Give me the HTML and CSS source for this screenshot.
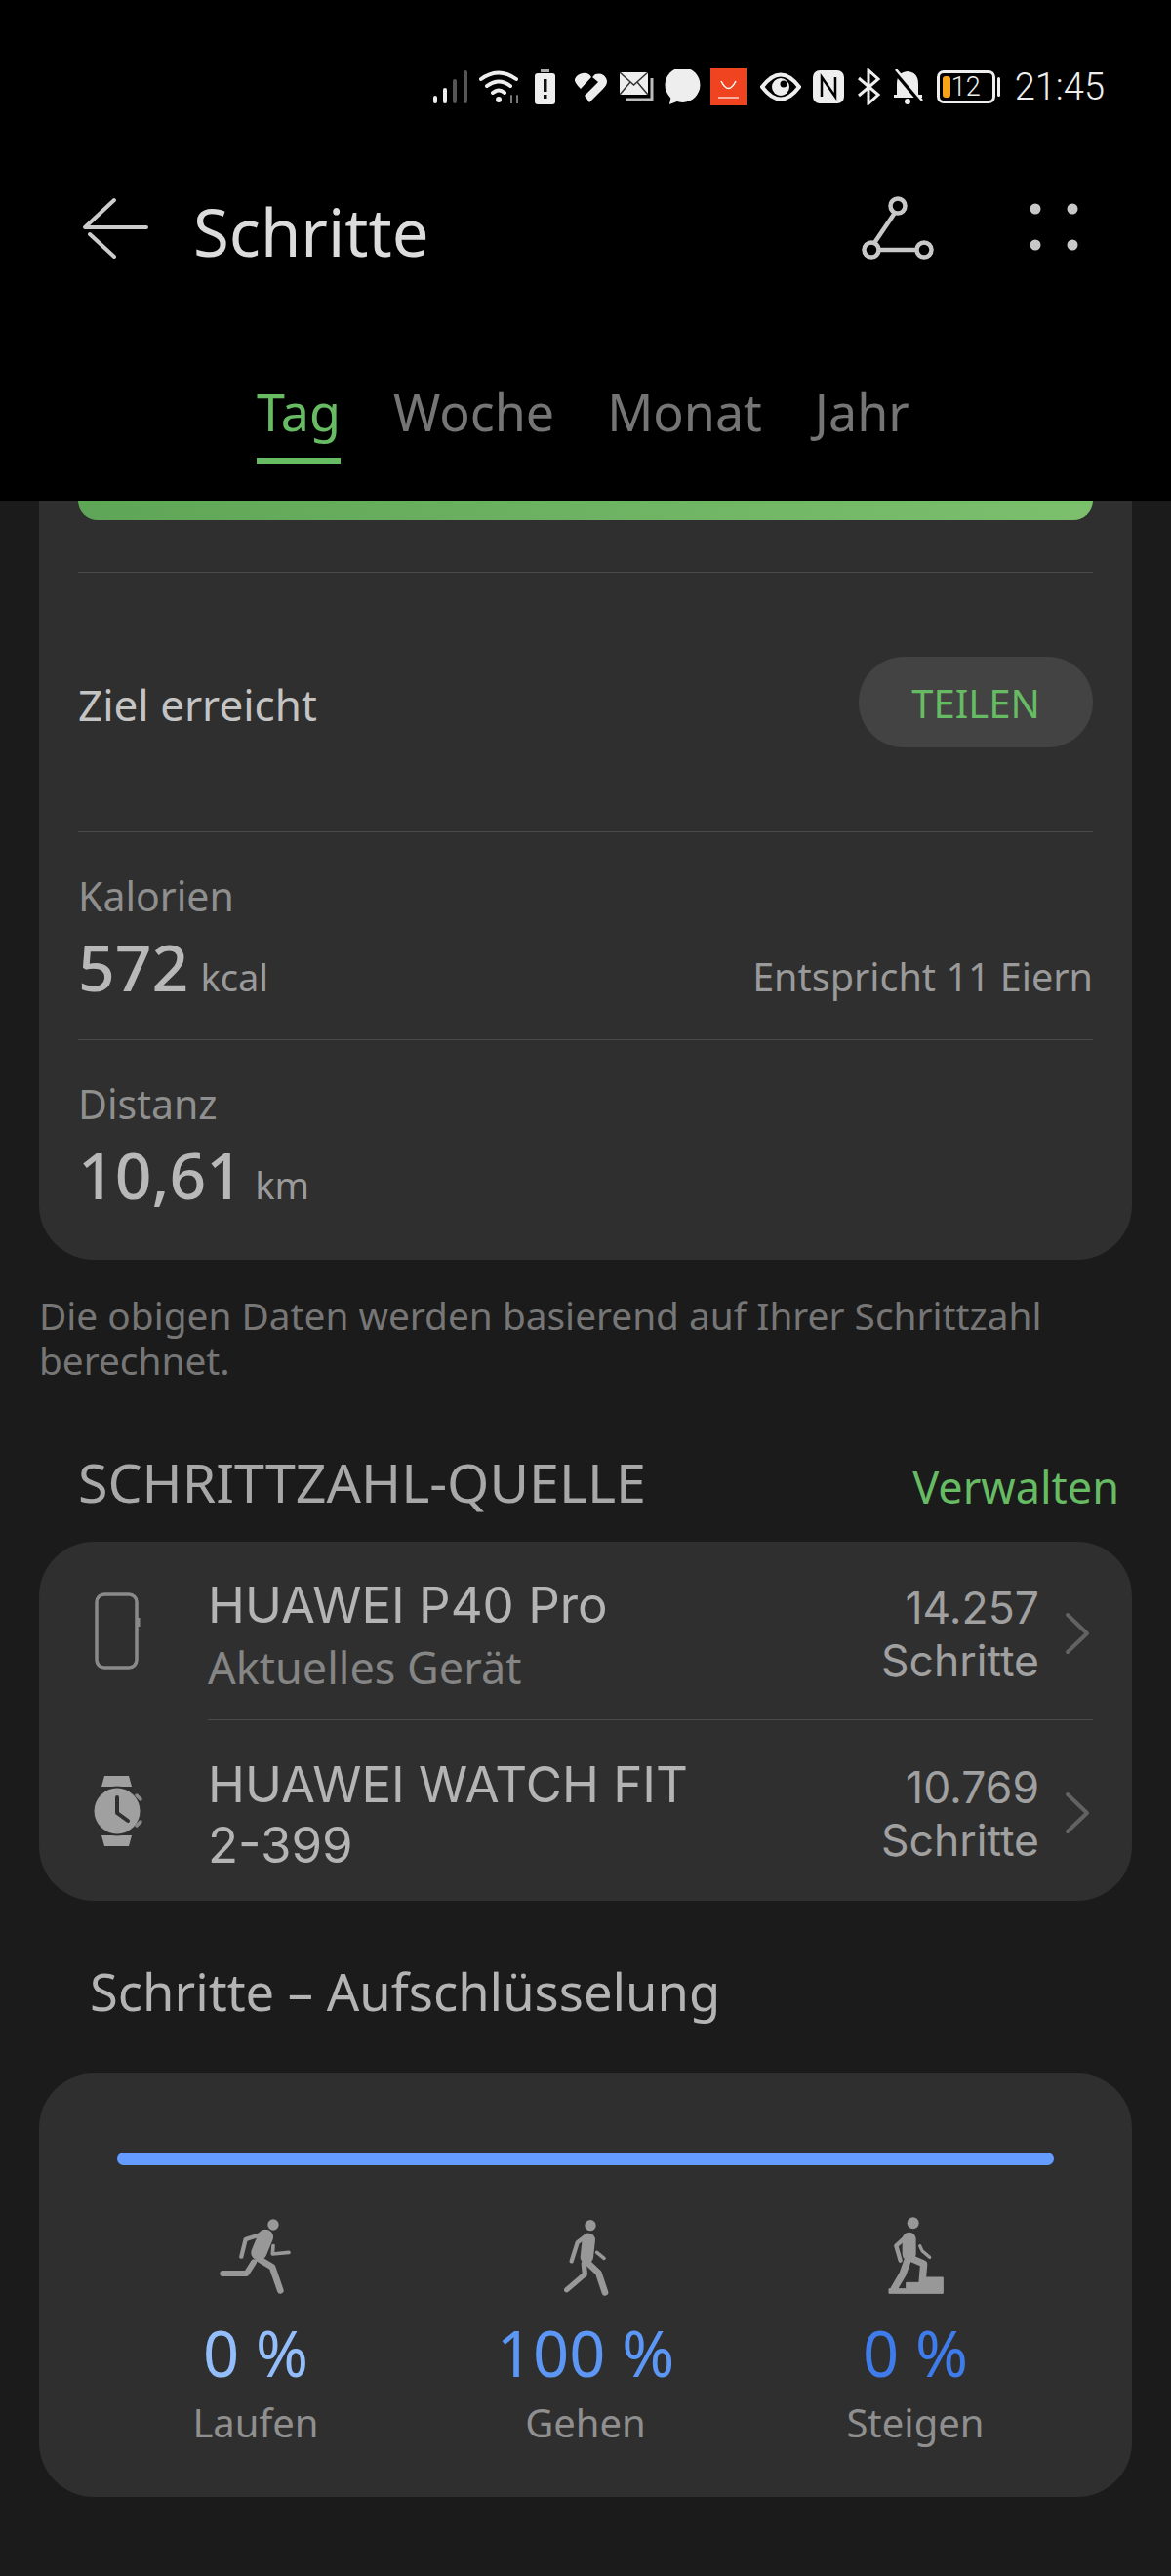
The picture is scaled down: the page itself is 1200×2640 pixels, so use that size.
FILE: index.html
```html
<!DOCTYPE html>
<html lang="de">
<head>
    <meta charset="UTF-8">
    <meta name="viewport" content="width=device-width, initial-scale=1.0">
    <title>Schritte</title>
    <link rel="stylesheet" href="styles.css">
</head>
<body>

<header class="topbar">
    <div class="status">
        <svg class="si" width="36" height="34" viewBox="0 0 36 34"><rect x="0" y="26" width="4" height="8" rx="2" fill="#eee"/><rect x="10" y="18" width="4" height="16" rx="2" fill="#eee"/><rect x="20" y="9" width="4" height="25" rx="2" fill="#555"/><rect x="31" y="0" width="4" height="34" rx="2" fill="#555"/></svg>
        <svg class="si" width="42" height="34" viewBox="0 0 42 34" fill="none" stroke="#eee" stroke-width="4" stroke-linecap="round"><path d="M2 9Q20 -4 38 9"/><path d="M8 16Q20 7 32 16"/><path d="M14 23Q20 18 26 23"/><circle cx="20" cy="30" r="3" fill="#eee" stroke="none"/><path d="M33 26v8M39 34v-8" stroke="#777" stroke-width="2"/></svg>
        <svg class="si" width="21" height="36" viewBox="0 0 21 36"><rect x="6" y="0" width="9" height="3" fill="#aaa"/><rect x="0" y="4" width="21" height="32" rx="3" fill="#eee"/><rect x="9" y="10" width="3.500" height="13" fill="#111"/><rect x="9" y="26" width="3.500" height="4" fill="#111"/></svg>
        <svg class="si" width="35" height="31" viewBox="0 0 35 31" fill="#eee"><path d="M9 1Q15 0 18 5L7 17Q0 10 1 7Q3 2 9 1Z"/><path d="M22 2Q30 0 33 6Q36 11 30 17L16 31L11 24L25 10L19 5Z"/></svg>
        <svg class="si" width="35" height="30" viewBox="0 0 35 30"><rect x="0" y="0" width="29" height="23" fill="#eee"/><path d="M0 0L14.500 13L29 0M0 23L11 10M29 23L18 10" stroke="#333" stroke-width="1.500" fill="none"/><path d="M33 6V28H6" stroke="#bbb" stroke-width="3" fill="none"/></svg>
        <svg class="si" width="37" height="36" viewBox="0 0 37 36" fill="#eee"><circle cx="18.500" cy="15.500" r="15.500" transform="translate(-3 -2) scale(1.160)"/><path d="M7 26L5 36L18 31Z"/></svg>
        <svg class="si" width="37" height="38" viewBox="0 0 37 38"><rect width="37" height="38" fill="#f0431f"/><path d="M11 13Q18.500 28 26 13" stroke="#fff" stroke-width="1.500" fill="none"/><rect x="8" y="29" width="21" height="2" fill="#f7b09e"/></svg>
        <svg class="si" width="42" height="30" viewBox="0 0 42 30"><path d="M2 15Q21 -10 40 15Q21 40 2 15Z" fill="none" stroke="#eee" stroke-width="4"/><circle cx="21" cy="15" r="9" fill="#eee"/><circle cx="24" cy="12" r="3.500" fill="#000"/></svg>
        <svg class="si" width="32" height="34" viewBox="0 0 32 34"><rect width="32" height="34" rx="7" fill="#eee"/><path d="M9 27V7L23 27V7" stroke="#000" stroke-width="2.500" fill="none"/></svg>
        <svg class="si" width="26" height="38" viewBox="0 0 26 38" fill="none" stroke="#eee" stroke-width="3"><path d="M3 10L23 27L13 36V2L23 11L3 28"/></svg>
        <svg class="si" width="33" height="36" viewBox="0 0 33 36"><path d="M16 2Q27 3 27 15V26H31V29H2V26H5V15Q5 3 16 2Z" fill="#eee"/><circle cx="16" cy="33" r="3" fill="#eee"/><path d="M2 1L30 34" stroke="#000" stroke-width="5"/><path d="M4 0L31 32" stroke="#eee" stroke-width="2.500"/></svg>
        <div class="bat"><span class="bat-fill"></span><span class="bat-num">12</span></div>
        <span class="bat-tip"></span>
        <span class="clock">21:45</span>
    </div>
    <div class="titlebar">
        <svg class="back" width="70" height="64" viewBox="0 0 70 64" fill="none" stroke="#ccc" stroke-width="4" stroke-linecap="round" stroke-linejoin="round"><path d="M34 4L4 32H67"/><path d="M9 39L34 62"/></svg>
        <h1 class="title">Schritte</h1>
        <svg class="share" width="76" height="68" viewBox="0 0 76 68" fill="none" stroke="#c8c8c8" stroke-width="4.500"><circle cx="39" cy="10" r="7.500"/><circle cx="12" cy="55" r="7.500"/><circle cx="66" cy="55" r="7.500"/><path d="M36 17L15 48M20 55H58"/></svg>
        <svg class="more" width="50" height="50" viewBox="0 0 50 50" fill="#c8c8c8"><circle cx="6" cy="6" r="5.500"/><circle cx="44" cy="6" r="5.500"/><circle cx="6" cy="43" r="5.500"/><circle cx="44" cy="43" r="5.500"/></svg>
    </div>
    <nav class="tabs">
        <span class="tab active">Tag</span>
        <span class="tab">Woche</span>
        <span class="tab">Monat</span>
        <span class="tab">Jahr</span>
    </nav>
</header>

<main class="page">
    <section class="card summary">
        <div class="goalbar"></div>
        <div class="row goal">
            <span class="goal-text">Ziel erreicht</span>
            <span class="btn">TEILEN</span>
        </div>
        <div class="row stat">
            <div class="stat-label">Kalorien</div>
            <div class="stat-line">
                <span><b class="num">572</b> <span class="unit">kcal</span></span>
                <span class="equiv">Entspricht 11 Eiern</span>
            </div>
        </div>
        <div class="row stat">
            <div class="stat-label">Distanz</div>
            <div class="stat-line">
                <span><b class="num">10,61</b> <span class="unit">km</span></span>
            </div>
        </div>
    </section>

    <p class="note">Die obigen Daten werden basierend auf Ihrer Schrittzahl berechnet.</p>

    <div class="source-head">
        <h2 class="source-title">SCHRITTZAHL-QUELLE</h2>
        <span class="manage">Verwalten</span>
    </div>

    <section class="card devices">
        <div class="device first">
            <svg class="dev-icon" width="50" height="80" viewBox="0 0 50 80" fill="none"><rect x="3" y="2" width="41" height="75" rx="8" stroke="#8a8a8a" stroke-width="3.500"/><rect x="44" y="26" width="3.500" height="9" fill="#8a8a8a"/></svg>
            <div class="dev-text">
                <div class="dev-name">HUAWEI P40 Pro</div>
                <div class="dev-sub">Aktuelles Gerät</div>
            </div>
            <div class="dev-count">14.257<br>Schritte</div>
            <svg class="chev" width="26" height="44" viewBox="0 0 26 44" fill="none" stroke="#626262" stroke-width="4" stroke-linecap="round" stroke-linejoin="round"><path d="M3 3L23 22L3 41"/></svg>
        </div>
        <div class="device">
            <svg class="dev-icon" width="50" height="74" viewBox="0 0 50 74"><path d="M8 12L11 1H36L39 12Z" fill="#a0a0a0"/><path d="M8 62L11 73H36L39 62Z" fill="#a0a0a0"/><circle cx="24" cy="37" r="25.500" fill="#2f2f2f"/><circle cx="24" cy="37" r="23.500" fill="#a0a0a0"/><path d="M24 23V39L35 47" fill="none" stroke="#2f2f2f" stroke-width="4" stroke-linecap="round" stroke-linejoin="round"/><path d="M44 21L48 25M44 52L48 48" stroke="#8a8a8a" stroke-width="3.500" stroke-linecap="round"/></svg>
            <div class="dev-text">
                <div class="dev-name">HUAWEI WATCH FIT<br>2-399</div>
            </div>
            <div class="dev-count">10.769<br>Schritte</div>
            <svg class="chev" width="26" height="44" viewBox="0 0 26 44" fill="none" stroke="#626262" stroke-width="4" stroke-linecap="round" stroke-linejoin="round"><path d="M3 3L23 22L3 41"/></svg>
        </div>
    </section>

    <h2 class="break-title">Schritte – Aufschlüsselung</h2>

    <section class="card breakdown">
        <div class="track"></div>
        <div class="modes">
            <div class="mode">
                <svg class="mode-icon" width="100" height="100" viewBox="6 0 300 300" fill="none" stroke="#989898" stroke-linecap="round" stroke-linejoin="round"><circle cx="210" cy="60" r="17" fill="#989898" stroke="none"/><path d="M112 158L125 105L178 88" stroke-width="13"/><path d="M186 98L166 146" stroke-width="48"/><path d="M165 165L207 190L232 262" stroke-width="20"/><path d="M150 175L128 210L55 210" stroke-width="18"/><path d="M210 125L208 150L258 145" stroke-width="11"/></svg>
                <div class="mode-val light">0 %</div>
                <div class="mode-name">Laufen</div>
            </div>
            <div class="mode">
                <svg class="mode-icon" width="100" height="100" viewBox="0 0 300 300" fill="none" stroke="#989898" stroke-linecap="round" stroke-linejoin="round"><circle cx="165" cy="62" r="17" fill="#989898" stroke="none"/><path d="M107 172L125 115L155 92" stroke-width="13"/><path d="M160 106L154 160" stroke-width="40"/><path d="M155 175L190 208L210 268" stroke-width="20"/><path d="M145 180L148 212L92 260" stroke-width="16"/><path d="M185 145L207 163" stroke-width="11"/></svg>
                <div class="mode-val mid">100 %</div>
                <div class="mode-name">Gehen</div>
            </div>
            <div class="mode">
                <svg class="mode-icon" width="100" height="100" viewBox="-6 0 300 300" fill="none" stroke="#989898" stroke-linecap="round" stroke-linejoin="round"><circle cx="137" cy="55" r="18" fill="#989898" stroke="none"/><path d="M98 170L85 125L115 97" stroke-width="13"/><path d="M125 104L125 150" stroke-width="42"/><path d="M158 125L165 140L188 160" stroke-width="10"/><path d="M135 165L170 180L165 240" stroke-width="22"/><path d="M120 170L105 212L78 258" stroke-width="22"/><path d="M172 222H229V271H63V257H116V238H172Z" fill="#989898" stroke-width="3"/></svg>
                <div class="mode-val dark">0 %</div>
                <div class="mode-name">Steigen</div>
            </div>
        </div>
    </section>
</main>

</body>
</html>
```

FILE: styles.css
```css
* {
    box-sizing: border-box;
}
html, body {
    margin: 0;
    padding: 0;
}
body {
    width: 1200px;
    height: 2640px;
    overflow: hidden;
    background-color: #1B1B1B;
    font-family: "Noto Sans", Roboto, sans-serif;
    color: #B4B4B4;
}
h1, h2, p {
    margin: 0;
    font-weight: 400;
}

/* barra superior negra */
.topbar {
    height: 513px;
    background-color: #000000;
}
.status {
    height: 178px;
    padding-right: 68px;
    display: flex;
    justify-content: flex-end;
    align-items: center;
}
.si {
    margin-right: 11px;
    flex: none;
}
.si:nth-child(2) { margin-right: 15px; }
.si:nth-child(3) { margin-right: 19px; }
.si:nth-child(4) { margin-right: 12px; }
.si:nth-child(6) { margin-right: 10px; }
.si:nth-child(7) { margin-right: 14px; }
.si:nth-child(8) { margin-right: 12px; }
.si:nth-child(9) { margin-right: 12px; }
.si:nth-child(11) { margin-right: 13px; }
.bat {
    width: 60px;
    height: 34px;
    border: 3px solid #EEEEEE;
    border-radius: 7px;
    display: flex;
    align-items: center;
    padding-left: 3px;
    gap: 1px;
}
.bat-fill {
    width: 8px;
    height: 22px;
    border-radius: 3px;
    background-color: #F7A21B;
}
.bat-num {
    font-family: Roboto, sans-serif;
    font-size: 27px;
    line-height: 28px;
    font-weight: 300;
    color: #EEEEEE;
}
.bat-tip {
    width: 3px;
    height: 20px;
    margin: 0 15px 0 2px;
    background-color: #EEEEEE;
    border-radius: 2px;
}
.clock {
    font-family: Roboto, sans-serif;
    font-size: 38px;
    font-weight: 300;
    color: #EEEEEE;
    white-space: nowrap;
}
.titlebar {
    height: 118px;
    display: flex;
    align-items: center;
    padding-left: 83px;
}
.back {
    margin-top: -8px;
}
.title {
    margin-left: 45px;
    font-size: 67px;
    line-height: 80px;
    color: #DCDCDC;
    flex: 1;
}
.share {
    margin-right: 98px;
    margin-top: -4px;
}
.more {
    margin-right: 95px;
    margin-top: -8px;
}
.tabs {
    height: 217px;
    padding: 81px 0 0 263px;
    display: flex;
    gap: 54px;
}
.tab {
    font-size: 52px;
    line-height: 90px;
    height: 99px;
    color: #757575;
}
.tab.active {
    color: #66BB63;
    border-bottom: 7px solid #66BB63;
}

/* contenido */
.page {
    padding: 0 40px;
}
.card {
    background-color: #2F2F2F;
    border-radius: 56px;
}
.summary {
    height: 778px;
    padding: 0 40px;
    border-radius: 0 0 56px 56px;
}
.goalbar {
    height: 20px;
    border-radius: 0 0 24px 24px;
    background: linear-gradient(90deg, #5FA557, #7CC06E);
}
.row {
    border-top: 1px solid #4A4A4A;
}
.goal {
    margin-top: 53px;
    height: 266px;
    display: flex;
    justify-content: space-between;
    align-items: center;
}
.goal-text {
    padding-top: 4px;
    font-size: 44px;
    color: #C4C4C4;
}
.btn {
    width: 240px;
    height: 93px;
    padding-top: 2px;
    border-radius: 47px;
    background-color: #434343;
    color: #66BB63;
    font-size: 40px;
    display: flex;
    align-items: center;
    justify-content: center;
}
.stat {
    height: 213px;
    padding-top: 41px;
}
.stat-label {
    font-size: 41px;
    line-height: 48px;
    color: #8F8F8F;
}
.stat-line {
    margin-top: 8px;
    display: flex;
    justify-content: space-between;
    align-items: baseline;
    line-height: 80px;
}
.num {
    font-size: 66px;
    font-weight: 500;
    color: #B8B8B8;
}
.unit {
    font-size: 38px;
    color: #9A9A9A;
    margin-left: 8px;
}
.equiv {
    font-size: 39.500px;
    color: #9A9A9A;
}
.note {
    margin-top: 34px;
    font-size: 38.800px;
    line-height: 46px;
    color: #767676;
    width: 1090px;
}
.source-head {
    margin-top: 64px;
    padding: 0 13px 24px 40px;
    height: 99px;
    display: flex;
    justify-content: space-between;
    align-items: center;
}
.source-title {
    font-size: 55.500px;
    color: #A8A8A8;
}
.manage {
    font-size: 45px;
    color: #66BB63;
    padding-top: 10px;
}
.devices {
    height: 368px;
    padding-left: 56px;
    padding-right: 43px;
}
.device {
    height: 185px;
    display: flex;
    align-items: center;
    position: relative;
}
.device.first {
    height: 183px;
}
.dev-icon {
    flex: none;
    width: 50px;
}
.dev-text {
    margin-left: 67px;
    padding-top: 8px;
    flex: 1;
}
.first .dev-text {
    padding-top: 10px;
}
.device.first::after {
    content: "";
    position: absolute;
    left: 117px;
    right: -3px;
    bottom: 0;
    border-bottom: 1px solid #4A4A4A;
}
.dev-name {
    font-family: Inter, "Noto Sans", sans-serif;
    font-size: 51px;
    line-height: 62px;
    color: #B4B4B4;
}
.dev-sub {
    margin-top: 2px;
    font-size: 45px;
    line-height: 62px;
    color: #858585;
}
.dev-count {
    padding-top: 7px;
    font-family: Inter, "Noto Sans", sans-serif;
    font-size: 44.500px;
    line-height: 54px;
    text-align: right;
    color: #A0A0A0;
}
.chev {
    margin: 5px 0 0 26px;
    flex: none;
}
.break-title {
    margin-top: 61px;
    padding-left: 52px;
    font-size: 52.500px;
    line-height: 64px;
    color: #B4B4B4;
}
.breakdown {
    margin-top: 52px;
    height: 434px;
    padding: 81px 80px 0;
}
.track {
    height: 13px;
    border-radius: 7px;
    background-color: #649CFF;
}
.modes {
    margin: 41px -27px 0;
    display: grid;
    grid-template-columns: repeat(3, 1fr);
}
.mode {
    display: flex;
    flex-direction: column;
    align-items: center;
}
.mode-val {
    margin-top: 11px;
    font-size: 65px;
    line-height: 80px;
}
.mode-val.light {
    color: #93BDFB;
}
.mode-val.mid {
    color: #5C97F5;
}
.mode-val.dark {
    color: #3F7CEB;
}
.mode-name {
    margin-top: 8px;
    font-size: 40px;
    line-height: 48px;
    color: #8F8F8F;
}
```
